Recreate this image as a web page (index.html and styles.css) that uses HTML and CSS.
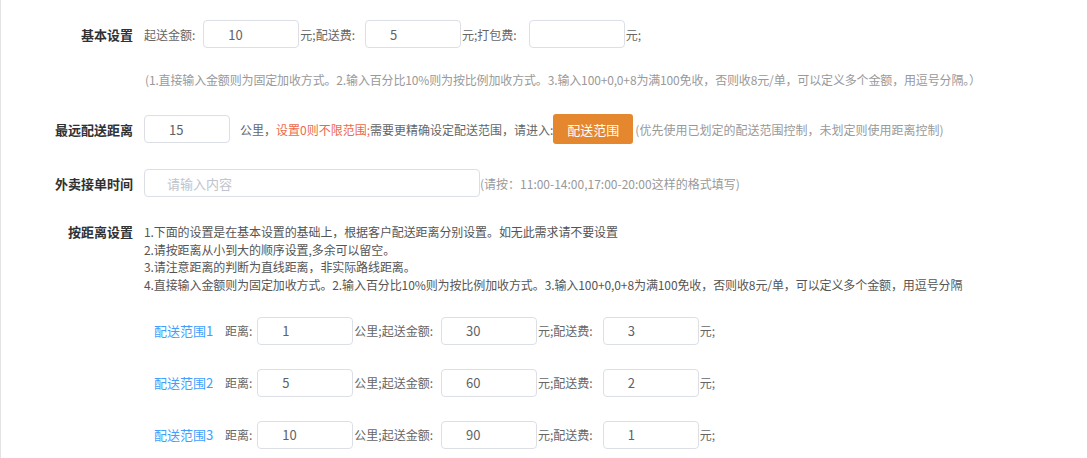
FILE: index.html
```html
<!doctype html>
<html lang="zh-CN">
  <head>
    <meta charset="UTF-8" />
    <meta name="viewport" content="width=device-width, initial-scale=1.0" />
    <title>配送设置</title>
    <link rel="stylesheet" href="styles.css">
  </head>
  <body>
    <div class="page">
      <div class="row row-basic">
        <div class="label">基本设置</div>
        <div class="content">
          <span class="txt">起送金额:</span>
          <input class="ipt ipt-sm gap-l8" value="10" />
          <span class="txt gap-l1">元;配送费:</span>
          <input class="ipt ipt-sm gap-l10" value="5" />
          <span class="txt gap-l1">元;打包费:</span>
          <input class="ipt ipt-sm gap-l12" value="" />
          <span class="txt gap-l1">元;</span>
        </div>
      </div>
      <div class="hint-row">
        (1.直接输入金额则为固定加收方式。2.输入百分比10%则为按比例加收方式。3.输入100+0,0+8为满100免收，否则收8元/单，可以定义多个金额，用逗号分隔。）
      </div>

      <div class="row row-distance">
        <div class="label">最远配送距离</div>
        <div class="content">
          <input class="ipt ipt-xs" value="15" />
          <span class="txt gap-l10">公里，</span><span class="warn">设置0则不限范围;</span><span class="txt">需要更精确设定配送范围，请进入:</span>
          <button class="btn-range">配送范围</button>
          <span class="tip">(优先使用已划定的配送范围控制，未划定则使用距离控制)</span>
        </div>
      </div>

      <div class="row row-time">
        <div class="label">外卖接单时间</div>
        <div class="content">
          <input class="ipt ipt-lg" placeholder="请输入内容" />
          <span class="tip">(请按：11:00-14:00,17:00-20:00这样的格式填写)</span>
        </div>
      </div>

      <div class="row row-rules">
        <div class="label">按距离设置</div>
        <div class="rules">
          <p>1.下面的设置是在基本设置的基础上，根据客户配送距离分别设置。如无此需求请不要设置</p>
          <p>2.请按距离从小到大的顺序设置,多余可以留空。</p>
          <p>3.请注意距离的判断为直线距离，非实际路线距离。</p>
          <p>4.直接输入金额则为固定加收方式。2.输入百分比10%则为按比例加收方式。3.输入100+0,0+8为满100免收，否则收8元/单，可以定义多个金额，用逗号分隔</p>
        </div>
      </div>

      <div class="range-list">
        <div class="range-row">
          <span class="range-name">配送范围1</span>
          <span class="txt">距离:</span>
          <input class="ipt ipt-sm gap-l5" value="1" />
          <span class="txt gap-l1">公里;起送金额:</span>
          <input class="ipt ipt-sm gap-l8" value="30" />
          <span class="txt gap-l1">元;配送费:</span>
          <input class="ipt ipt-sm gap-l10" value="3" />
          <span class="txt gap-l1">元;</span>
        </div>
        <div class="range-row">
          <span class="range-name">配送范围2</span>
          <span class="txt">距离:</span>
          <input class="ipt ipt-sm gap-l5" value="5" />
          <span class="txt gap-l1">公里;起送金额:</span>
          <input class="ipt ipt-sm gap-l8" value="60" />
          <span class="txt gap-l1">元;配送费:</span>
          <input class="ipt ipt-sm gap-l10" value="2" />
          <span class="txt gap-l1">元;</span>
        </div>
        <div class="range-row">
          <span class="range-name">配送范围3</span>
          <span class="txt">距离:</span>
          <input class="ipt ipt-sm gap-l5" value="10" />
          <span class="txt gap-l1">公里;起送金额:</span>
          <input class="ipt ipt-sm gap-l8" value="90" />
          <span class="txt gap-l1">元;配送费:</span>
          <input class="ipt ipt-sm gap-l10" value="1" />
          <span class="txt gap-l1">元;</span>
        </div>
      </div>
    </div>
  </body>
</html>
```

FILE: styles.css
```css
* {
  margin: 0;
  padding: 0;
  box-sizing: border-box;
}

body {
  font-family: "Noto Sans CJK SC", "Noto Sans", sans-serif;
  background: #fff;
  color: #606266;
  font-size: 12px;
}

.page {
  min-height: 100vh;
  border-left: 1px solid #e4e4e4;
  padding-top: 20px;
}

.row {
  display: flex;
  align-items: center;
}

.label {
  width: 143px;
  padding-right: 11px;
  text-align: right;
  font-size: 13px;
  font-weight: 600;
  color: #303133;
  flex-shrink: 0;
}

.content {
  display: flex;
  align-items: center;
  white-space: nowrap;
}

.txt {
  color: #666;
}

.warn {
  color: #ec6a4c;
}

.tip {
  color: #999;
}

.ipt {
  height: 28px;
  border: 1px solid #dcdfe6;
  border-radius: 4px;
  padding-left: 24px;
  font-family: inherit;
  font-size: 13px;
  color: #606266;
  outline: none;
  background: #fff;
}

.ipt::placeholder {
  color: #c0c4cc;
}

.ipt-xs {
  width: 86px;
}

.ipt-sm {
  width: 96px;
}

.ipt-lg {
  width: 336px;
  padding-left: 22px;
}

.gap-l1 {
  margin-left: 1px;
}

.gap-l5 {
  margin-left: 5px;
}

.gap-l8 {
  margin-left: 8px;
}

.gap-l10 {
  margin-left: 10px;
}

.gap-l12 {
  margin-left: 12px;
}

.hint-row {
  margin-top: 23px;
  padding-left: 144px;
  color: #999;
  line-height: 17px;
  letter-spacing: -0.15px;
  white-space: nowrap;
}

.row-distance {
  margin-top: 26px;
}

.btn-range {
  width: 80px;
  height: 30px;
  border: none;
  border-radius: 3px;
  background: #e5872f;
  color: #fff;
  font-family: inherit;
  font-size: 13px;
  margin: 0 2px 0 0;
}

.row-time {
  margin-top: 25px;
}

.row-rules {
  margin-top: 26px;
  align-items: flex-start;
}

.row-rules .label {
  line-height: 18px;
}

.rules p {
  color: #555;
  line-height: 17.7px;
  letter-spacing: -0.1px;
  white-space: nowrap;
}

.range-list {
  padding-left: 153px;
  margin-top: 23px;
}

.range-row {
  display: flex;
  align-items: center;
  height: 28px;
  margin-bottom: 24px;
  white-space: nowrap;
}

.range-name {
  color: #409eff;
  font-size: 13px;
  width: 71px;
}
```
